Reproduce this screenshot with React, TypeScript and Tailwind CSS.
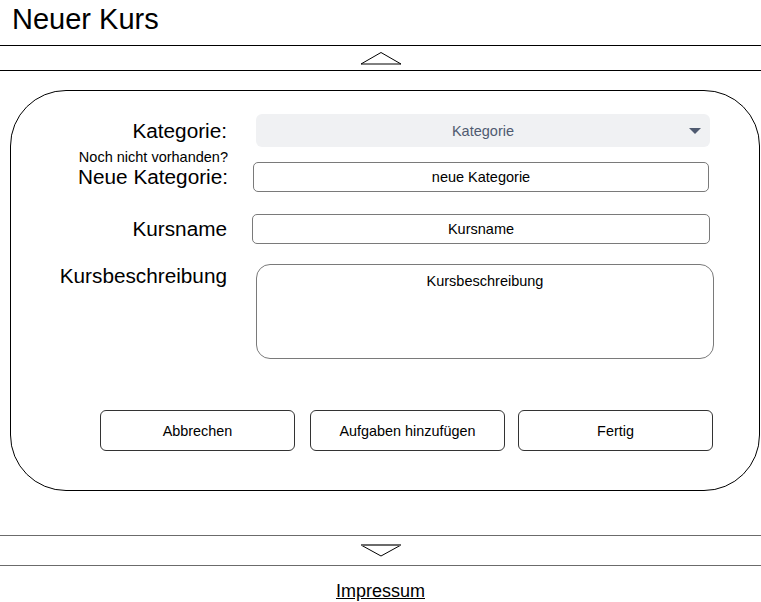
import React from "react";

const font = { fontFamily: '"Liberation Sans", Arial, sans-serif' };

const Field = ({ text, className }: { text: string; className: string }) => (
  <div
    className={`flex items-center justify-center border border-[#7a7a7a] bg-white pt-[2px] text-[14.5px] text-black ${className}`}
  >
    {text}
  </div>
);

const ActionButton = ({ label, className = "" }: { label: string; className?: string }) => (
  <button
    className={`flex h-[41px] w-[195px] items-center justify-center rounded-md border border-[#333] bg-white pt-[2px] text-[14.4px] text-black ${className}`}
  >
    {label}
  </button>
);

export default function App() {
  return (
    <div className="flex w-[761px] flex-col bg-white text-black" style={font}>
      <header className="h-[46px] border-b border-black pl-3 pt-[3px]">
        <h1 className="text-[29px] leading-8">Neuer Kurs</h1>
      </header>

      <div className="flex h-[25px] items-center justify-center border-b border-black">
        <svg width="42" height="14" viewBox="0 0 42 14">
          <path d="M1 13 L21 1.5 L41 13 Z" fill="none" stroke="#000" strokeWidth="1" />
        </svg>
      </div>

      <main className="pl-[10px] pr-[1px] pt-[19px]">
        <div className="flex h-[401px] flex-col rounded-[56px] border border-black pt-[23px]">
          <div className="flex items-center">
            <span className="w-[216px] text-right text-[20.75px] leading-6">Kategorie:</span>
            <div className="relative ml-[29px] flex h-[33px] w-[454px] items-center justify-center rounded-md bg-[#f0f1f3] pt-[2px] text-[14.5px] text-[#4f5a70]">
              Kategorie
              <svg
                className="absolute right-[9px] top-[14px]"
                width="12"
                height="6"
                viewBox="0 0 12 6"
              >
                <path d="M0 0 L12 0 L6 6 Z" fill="#4f5a70" />
              </svg>
            </div>
          </div>

          <div className="mt-[2px] flex items-start">
            <div className="flex w-[217px] flex-col items-end">
              <span className="text-[14.5px] leading-4">Noch nicht vorhanden?</span>
              <span className="text-[20.75px] leading-6">Neue Kategorie:</span>
            </div>
            <Field
              text="neue Kategorie"
              className="ml-[25px] mt-[13px] h-[30px] w-[456px] rounded-[5px]"
            />
          </div>

          <div className="mt-[22px] flex items-center">
            <span className="w-[216px] text-right text-[20.75px] leading-6">Kursname</span>
            <Field text="Kursname" className="ml-[25px] h-[30px] w-[458px] rounded-[5px]" />
          </div>

          <div className="mt-[20px] flex items-start">
            <span className="w-[216px] text-right text-[20.75px] leading-6">
              Kursbeschreibung
            </span>
            <div className="ml-[29px] flex h-[95px] w-[458px] justify-center rounded-[14px] border border-[#7a7a7a] pt-[8px] text-[14.5px] leading-4">
              Kursbeschreibung
            </div>
          </div>

          <div className="ml-[89px] mt-[51px] flex">
            <ActionButton label="Abbrechen" />
            <ActionButton label="Aufgaben hinzufügen" className="ml-[15px]" />
            <ActionButton label="Fertig" className="ml-[13px]" />
          </div>
        </div>
      </main>

      <div className="mt-[44px] flex h-[31px] items-center justify-center border-y border-[#6b6b6b]">
        <svg width="42" height="13" viewBox="0 0 42 13">
          <path d="M1 1 L21 12 L41 1" fill="none" stroke="#000" strokeWidth="1" />
          <path d="M1 1 L41 1" stroke="#6b6b6b" strokeWidth="2" />
        </svg>
      </div>

      <footer className="flex justify-center pt-[13px]">
        <a href="#" className="text-[18px] leading-6 text-black underline">
          Impressum
        </a>
      </footer>
    </div>
  );
}
